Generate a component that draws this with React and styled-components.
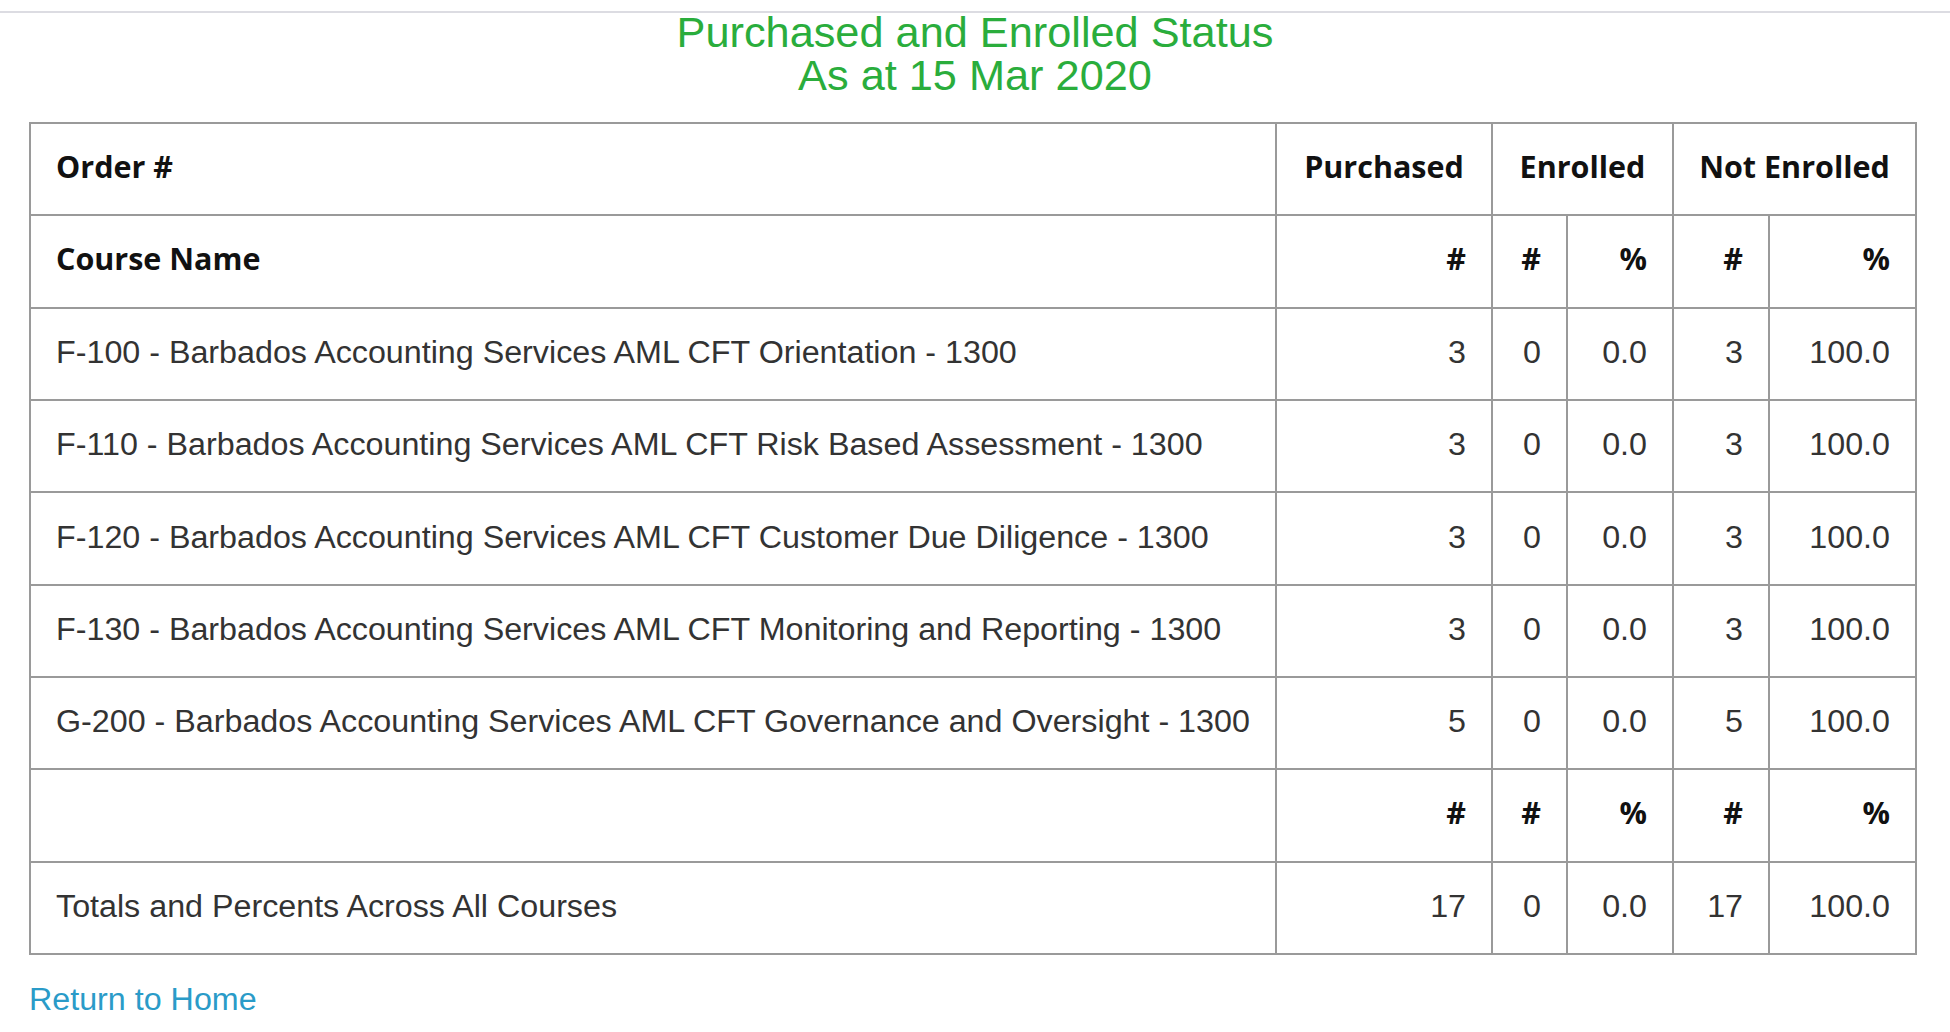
import React from "react";
import styled, { createGlobalStyle } from "styled-components";

const GlobalStyle = createGlobalStyle`
  html, body {
    margin: 0;
    padding: 0;
    background: #ffffff;
    font-family: "Liberation Sans", Arial, sans-serif;
  }
`;

const Page = styled.div`
  display: flex;
  flex-direction: column;
  width: 1950px;
`;

const TopRule = styled.div`
  margin-top: 11px;
  height: 2px;
  background: #dcdce2;
`;

const Title = styled.h1`
  margin: -2.5px 0 0 0;
  text-align: center;
  color: #2aad3c;
  font-family: "Liberation Sans", Arial, sans-serif;
  font-weight: normal;
  font-size: 43.3px;
  line-height: 43px;
`;

const Content = styled.div`
  display: flex;
  flex-direction: column;
  align-items: flex-start;
  padding: 0 0 0 29px;
`;

const Table = styled.table`
  margin-top: 25.5px;
  width: 1886px;
  table-layout: fixed;
  border-collapse: collapse;
  border: 2px solid #9a9a9a;
`;

const HeadCell = styled.th`
  border: 2px solid #9a9a9a;
  padding: 24px 25px 30.33px 25px;
  line-height: 36px;
  font-family: "Open Sans", "Noto Sans", sans-serif;
  font-weight: 700;
  font-size: 30.5px;
  color: #111111;
  white-space: nowrap;
  text-align: ${(p) => p.$align || "right"};
`;

const Cell = styled.td`
  border: 2px solid #9a9a9a;
  padding: 25.5px 25px 28.83px 25px;
  line-height: 36px;
  font-family: "Liberation Sans", Arial, sans-serif;
  font-size: 32.25px;
  color: #333333;
  white-space: nowrap;
  text-align: ${(p) => p.$align || "right"};
`;

const HomeLink = styled.a`
  margin-top: 26px;
  font-family: "Liberation Sans", Arial, sans-serif;
  font-size: 32.25px;
  line-height: 36px;
  color: #2a9bc8;
  text-decoration: none;
`;

const rows = [
  ["F-100 - Barbados Accounting Services AML CFT Orientation - 1300", 3, 0, "0.0", 3, "100.0"],
  ["F-110 - Barbados Accounting Services AML CFT Risk Based Assessment - 1300", 3, 0, "0.0", 3, "100.0"],
  ["F-120 - Barbados Accounting Services AML CFT Customer Due Diligence - 1300", 3, 0, "0.0", 3, "100.0"],
  ["F-130 - Barbados Accounting Services AML CFT Monitoring and Reporting - 1300", 3, 0, "0.0", 3, "100.0"],
  ["G-200 - Barbados Accounting Services AML CFT Governance and Oversight - 1300", 5, 0, "0.0", 5, "100.0"],
];

const SubHeader = ({ label }) => (
  <tr>
    <HeadCell $align="left">{label}</HeadCell>
    <HeadCell>#</HeadCell>
    <HeadCell>#</HeadCell>
    <HeadCell>%</HeadCell>
    <HeadCell>#</HeadCell>
    <HeadCell>%</HeadCell>
  </tr>
);

export default function App() {
  return (
    <Page>
      <GlobalStyle />
      <TopRule />
      <Title>
        Purchased and Enrolled Status
        <br />
        As at 15 Mar 2020
      </Title>
      <Content>
        <Table>
          <colgroup>
            <col style={{ width: "1246px" }} />
            <col style={{ width: "216px" }} />
            <col style={{ width: "75px" }} />
            <col style={{ width: "106px" }} />
            <col style={{ width: "96px" }} />
            <col style={{ width: "147px" }} />
          </colgroup>
          <thead>
            <tr>
              <HeadCell $align="left">Order #</HeadCell>
              <HeadCell $align="center">Purchased</HeadCell>
              <HeadCell $align="center" colSpan={2}>Enrolled</HeadCell>
              <HeadCell $align="center" colSpan={2}>Not Enrolled</HeadCell>
            </tr>
            <SubHeader label="Course Name" />
          </thead>
          <tbody>
            {rows.map((r) => (
              <tr key={r[0]}>
                <Cell $align="left">{r[0]}</Cell>
                <Cell>{r[1]}</Cell>
                <Cell>{r[2]}</Cell>
                <Cell>{r[3]}</Cell>
                <Cell>{r[4]}</Cell>
                <Cell>{r[5]}</Cell>
              </tr>
            ))}
            <SubHeader label="" />
            <tr>
              <Cell $align="left">Totals and Percents Across All Courses</Cell>
              <Cell>17</Cell>
              <Cell>0</Cell>
              <Cell>0.0</Cell>
              <Cell>17</Cell>
              <Cell>100.0</Cell>
            </tr>
          </tbody>
        </Table>
        <HomeLink href="#">Return to Home</HomeLink>
      </Content>
    </Page>
  );
}
